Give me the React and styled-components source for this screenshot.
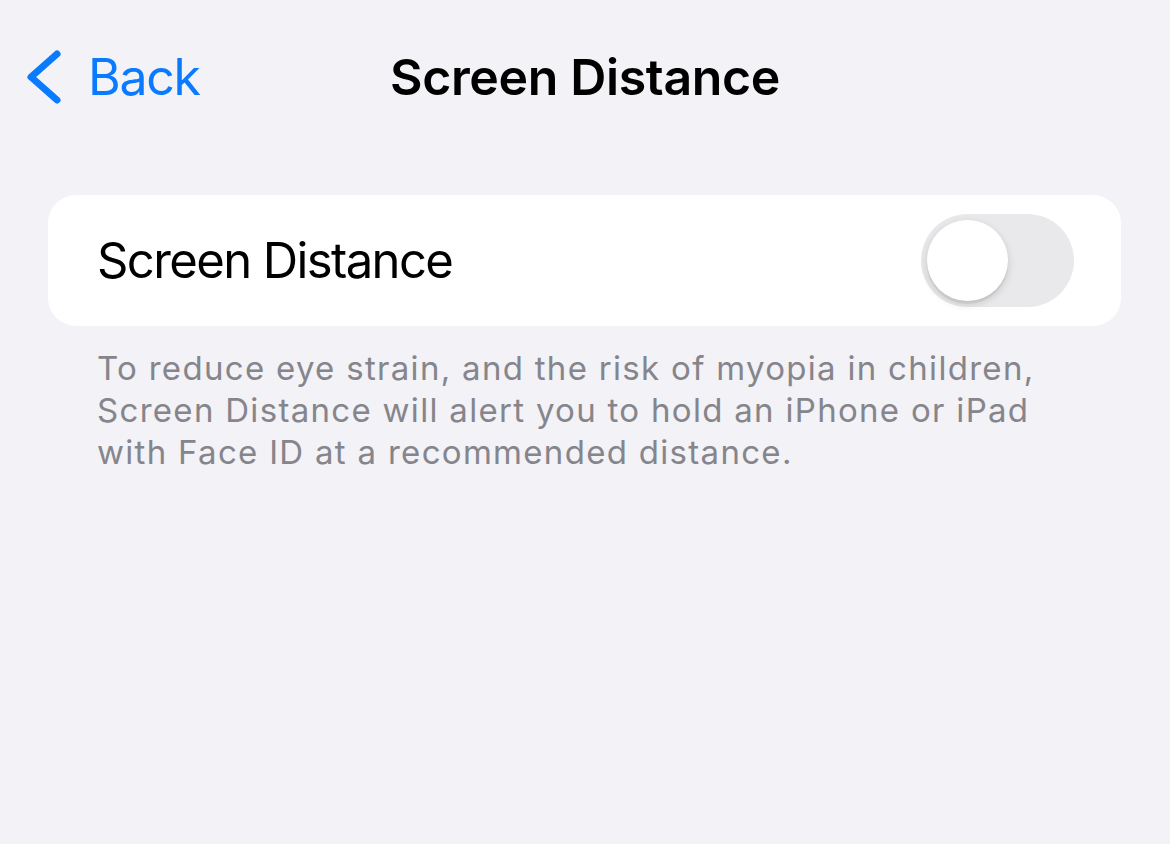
import React, { useState } from "react"
import styled, { createGlobalStyle } from "styled-components"

const GlobalStyle = createGlobalStyle`
  html, body {
    margin: 0;
    background: #f2f2f7;
  }
  body {
    font-family: Inter, "Liberation Sans", Arial, sans-serif;
    -webkit-font-smoothing: antialiased;
  }
`

const Page = styled.div`
  min-height: 100vh;
  box-sizing: border-box;
  padding: 0 49px 0 48px;
`

const NavBar = styled.header`
  display: grid;
  grid-template-columns: 1fr auto 1fr;
  align-items: center;
  height: 60px;
  margin: 0 -49px 0 -48px;
  padding: 46px 24px 0;
`

const BackButton = styled.button`
  display: flex;
  align-items: center;
  gap: 24px;
  justify-self: start;
  padding: 0;
  border: 0;
  background: none;
  color: #0a7aff;
  font: inherit;
  font-size: 50px;
  letter-spacing: -1.3px;
  cursor: pointer;
`

const Title = styled.h1`
  margin: 0;
  font-size: 50px;
  font-weight: 600;
  letter-spacing: -0.35px;
  color: #000;
  line-height: 60px;
`

const Card = styled.section`
  display: flex;
  align-items: center;
  justify-content: space-between;
  height: 131px;
  margin-top: 89px;
  padding: 0 47px 0 49px;
  background: #fff;
  border-radius: 28px;
`

const Label = styled.span`
  font-size: 49px;
  letter-spacing: -1.6px;
  color: #000;
`

const Track = styled.button`
  position: relative;
  width: 153px;
  height: 93px;
  padding: 0;
  border: 0;
  border-radius: 47px;
  background: ${({ $on }) => ($on ? "#34c759" : "#e9e9eb")};
  cursor: pointer;
  transition: background 0.2s;
`

const Knob = styled.span`
  position: absolute;
  top: 6px;
  left: ${({ $on }) => ($on ? "66px" : "6px")};
  width: 81px;
  height: 81px;
  border-radius: 50%;
  background: #fff;
  box-shadow: 0 3px 8px rgba(0, 0, 0, 0.15), 0 3px 1px rgba(0, 0, 0, 0.06);
  transition: left 0.2s;
`

const Footnote = styled.p`
  margin: 21px 0 0;
  padding: 0 49px;
  font-size: 33px;
  line-height: 42px;
  letter-spacing: 1.3px;
  color: #85858b;
`

const Chevron = () => (
  <svg width="40" height="62" viewBox="0 0 40 62" fill="none">
    <path
      d="M33 8 L7 31 L33 54"
      stroke="currentColor"
      strokeWidth="7"
      strokeLinecap="round"
      strokeLinejoin="round"
    />
  </svg>
)

const App = () => {
  const [enabled, setEnabled] = useState(false)
  return (
    <Page>
      <GlobalStyle />
      <NavBar>
        <BackButton>
          <Chevron />
          Back
        </BackButton>
        <Title>Screen Distance</Title>
        <span />
      </NavBar>
      <Card>
        <Label>Screen Distance</Label>
        <Track $on={enabled} onClick={() => setEnabled(!enabled)}>
          <Knob $on={enabled} />
        </Track>
      </Card>
      <Footnote>
        To reduce eye strain, and the risk of myopia in children,
        <br />
        Screen Distance will alert you to hold an iPhone or iPad
        <br />
        with Face ID at a recommended distance.
      </Footnote>
    </Page>
  )
}

export default App
